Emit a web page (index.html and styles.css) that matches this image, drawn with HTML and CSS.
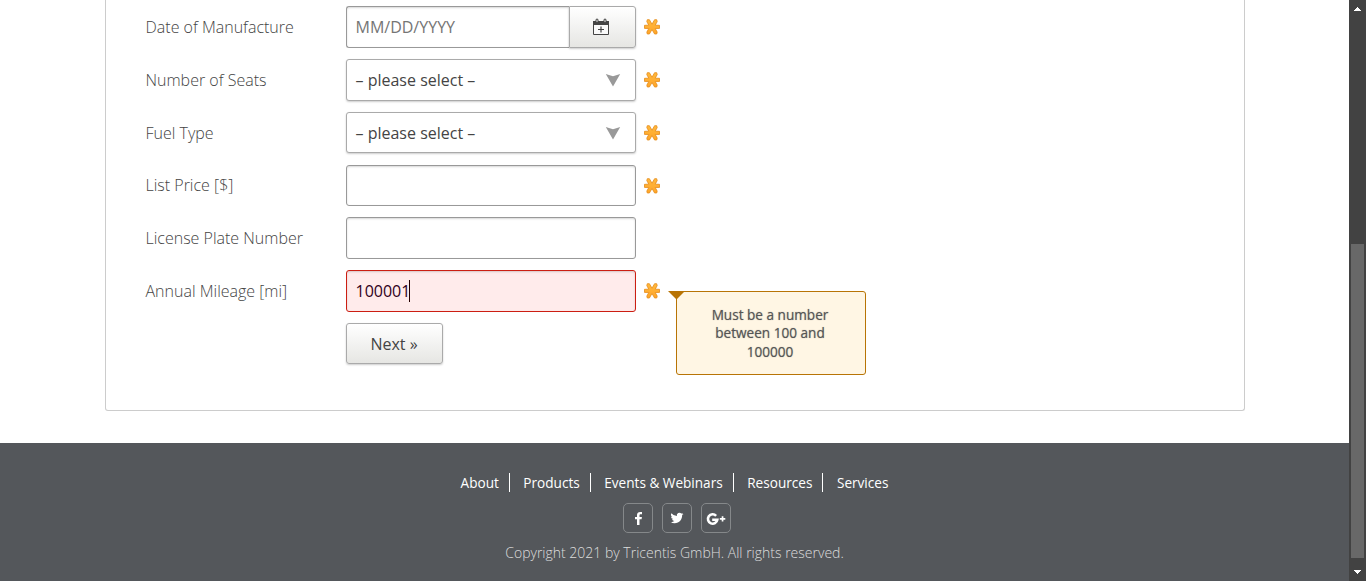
FILE: index.html
```html
<!DOCTYPE html>
<html lang="en">
<head>
<meta charset="utf-8">
<title>Enter Vehicle Data</title>
<link rel="stylesheet" href="styles.css">
</head>
<body>
<svg class="defs" width="0" height="0">
  <defs>
    <linearGradient id="amber" x1="0" y1="0" x2="0" y2="1"><stop offset="0" stop-color="#ffb83c"/><stop offset="1" stop-color="#ffa62a"/></linearGradient>
  </defs>
  <symbol id="star" viewBox="0 0 16 16">
    <path d="M3.300.7 5.400.7 8 5.200 10.600.7 12.700.7 13.200 2.600 11.200 6.200 15.500 6.300v3.100L11.200 9.500 13.200 13.100 12.700 15 10.600 15 8 10.500 5.400 15 3.300 15 2.800 13.100 4.800 9.500.5 9.400V6.300L4.800 6.200 2.800 2.600z" fill="url(#amber)" stroke="#e58a18" stroke-width=".8"/>
  </symbol>
</svg>
<div class="window">
  <div class="page">
    <main class="panel">
      <form class="form">
        <div class="row">
          <label class="label">Date of Manufacture</label>
          <div class="date"><div class="input placeholder">MM/DD/YYYY</div><div class="picker">
            <svg width="18" height="18" viewBox="0 0 18 18"><path d="M1.500 4.500h15v12h-15z" fill="#fafafa" stroke="#444"/><path d="M1 3h16v4H1z" fill="#444"/><path d="M4 1.500q1-1 2 0v2.700q-1 1-2 0zM12 1.500q1-1 2 0v2.700q-1 1-2 0z" fill="#eee" stroke="#444"/><path d="M9 8.500v6M6 11.500h6" stroke="#444" stroke-width="1.200"/></svg>
          </div></div>
          <svg class="star"><use href="#star"/></svg>
        </div>
        <div class="row">
          <label class="label">Number of Seats</label>
          <div class="select"><span>– please select –</span><svg width="16" height="14" viewBox="0 0 16 14"><path d="M.8 1 8 3.300 15.200 1 8 13.500z" fill="#999"/></svg></div>
          <svg class="star"><use href="#star"/></svg>
        </div>
        <div class="row">
          <label class="label">Fuel Type</label>
          <div class="select"><span>– please select –</span><svg width="16" height="14" viewBox="0 0 16 14"><path d="M.8 1 8 3.300 15.200 1 8 13.500z" fill="#999"/></svg></div>
          <svg class="star"><use href="#star"/></svg>
        </div>
        <div class="row">
          <label class="label">List Price [$]</label>
          <div class="input"></div>
          <svg class="star"><use href="#star"/></svg>
        </div>
        <div class="row">
          <label class="label">License Plate Number</label>
          <div class="input"></div>
        </div>
        <div class="row">
          <label class="label">Annual Mileage [mi]</label>
          <div class="input invalid">100001<span class="caret"></span></div>
          <svg class="star"><use href="#star"/></svg>
          <div class="tooltip">Must be a number between 100 and 100000<svg class="pointer" width="17" height="9" viewBox="0 0 17 9"><path d="M0 0h17L8.500 8.500z" fill="#b87405"/></svg></div>
        </div>
        <div class="row"><button class="next" type="button">Next »</button></div>
      </form>
    </main>
    <footer class="footer">
      <nav class="links"><a>About</a><a>Products</a><a>Events &amp; Webinars</a><a>Resources</a><a>Services</a></nav>
      <div class="social">
        <a><svg width="28" height="28" viewBox="0 0 28 28"><path d="M18 8.100v2.200h-1.300c-.9 0-1.200.5-1.200 1.100v1.500h2.400l-.3 2.400h-2.100V21H13v-5.700h-2v-2.400h2v-1.800c0-2.100 1.300-3.200 3.200-3.200.8 0 1.500.1 1.800.2z"/></svg></a>
        <a><svg width="28" height="28" viewBox="0 0 28 28"><path transform="translate(7.500 7.500) scale(.54)" d="M24 4.600a10 10 0 0 1-2.800.8A5 5 0 0 0 23.300 2.700a10 10 0 0 1-3.100 1.200A4.900 4.900 0 0 0 11.800 8.400 14 14 0 0 1 1.700 3.200a4.900 4.900 0 0 0 1.500 6.600A5 5 0 0 1 1 9.200a4.900 4.900 0 0 0 3.900 4.900 5 5 0 0 1-2.200.1 4.900 4.900 0 0 0 4.600 3.400A10 10 0 0 1 0 19.600 14 14 0 0 0 7.500 21.800c9.100 0 14.400-7.700 14-14.700A10 10 0 0 0 24 4.600z"/></svg></a>
        <a><svg width="28" height="28" viewBox="0 0 28 28"><path d="M14.700 11.600a4.700 4.700 0 1 0 1.200 4H10.800" fill="none" stroke="#fff" stroke-width="2.600" transform="translate(-.6 .2)"/><path d="M19.700 12.300h1.700V14h1.900v1.700h-1.900v1.800h-1.700v-1.800h-1.900V14h1.900z"/></svg></a>
      </div>
      <p class="copyright">Copyright 2021 by Tricentis GmbH. All rights reserved.</p>
    </footer>
  </div>
  <div class="scrollbar">
    <svg width="7" height="4" viewBox="0 0 7 4" shape-rendering="crispEdges"><path d="M0 4 3.500 0 7 4z" fill="#fff"/></svg>
    <div class="thumb"></div>
    <svg width="7" height="4" viewBox="0 0 7 4" shape-rendering="crispEdges"><path d="M0 0h7L3.500 4z" fill="#fff"/></svg>
  </div>
</div>
</body>
</html>
```
FILE: styles.css
```css
* { box-sizing: border-box; }
body { margin: 0; background: #fff; font: 300 16px/24px "Open Sans", "Noto Sans", sans-serif; color: #444; }
.defs { display: block; height: 0; }
.window { display: flex; height: 581px; overflow: hidden; }
.page { width: 1349px; display: flex; flex-direction: column; }
.panel { width: 1140px; height: 411px; flex: none; margin-left: 105px; border: 1px solid #ccc; border-top: 0; border-radius: 0 0 3px 3px; padding: 6.300px 0 0 39.500px; }
.form { display: flex; flex-direction: column; gap: 11.200px; }
.row { position: relative; display: flex; align-items: center; height: 41.600px; }
.label { width: 200px; }
.input, .select { width: 290px; height: 100%; padding: 0 9px; border: 1px solid #999; border-radius: 3px; display: flex; align-items: center; font-weight: 400; background: #fff; }
.input { box-shadow: inset 0 1px 2px rgba(0,0,0,.16); }
.select { justify-content: space-between; padding-right: 14px; border-color: #aaa; box-shadow: 0 1px 2px rgba(0,0,0,.2); }
.date { display: flex; width: 290px; height: 100%; }
.date .input { width: 223px; border-right: 0; border-radius: 3px 0 0 3px; }
.placeholder { color: #757575; }
.picker, .next { background: linear-gradient(#fff, #e6e6e3); border: 1px solid #aaa; border-radius: 3px; box-shadow: 0 1px 2px rgba(0,0,0,.2); }
.picker { width: 67px; display: flex; align-items: center; justify-content: center; border-radius: 0 3px 3px 0; padding-right: 2px; }
.star { width: 16px; height: 16px; margin: .6px 0 0 8.500px; }
.invalid { background: #ffebeb; border-color: #cc1e12; color: #300020; }
.caret { width: 1px; height: 22px; margin-left: -1px; background: #200; }
.tooltip { position: absolute; left: 530.500px; top: 21px; width: 190px; height: 84px; padding: 13.500px 31px 13px 29px; border: 1px solid #b87405; border-radius: 3px; background: #fff6e4; color: #555; text-align: center; font-size: 13.600px; line-height: 18.600px; font-weight: 400; text-shadow: 0 0 1px rgba(85,85,85,.6); }
.pointer { position: absolute; left: -9px; top: -1px; }
.next { margin-left: 200.500px; width: 97px; height: 41px; padding: 0 1px 0 0; font: inherit; font-weight: 400; color: #444; }
.footer { margin-top: 32px; flex: 1; background: #54575b; display: flex; flex-direction: column; align-items: center; padding-top: 30px; font-size: 14px; color: #fff; }
.links { display: flex; font-size: 13.600px; font-weight: 400; line-height: 19px; }
.links a { padding-right: 10px; margin-right: 13.500px; border-right: 1px solid #fff; }
.links a:last-child { padding: 0; margin: 0; border: 0; }
.social { display: flex; gap: 9px; margin: 11px 0 0 4px; }
.social a { width: 30px; height: 30px; border: 1px solid #85888a; border-radius: 5px; }
.social svg { display: block; fill: #fff; }
.copyright { margin: 10px 0 0; line-height: 20px; color: #ddd; }
.scrollbar { width: 17px; height: 581px; background: #424242; display: flex; flex-direction: column; align-items: center; padding-top: 7px; }
.thumb { width: 13px; height: 314px; background: #686868; margin: 233px 0 12px; }
```
